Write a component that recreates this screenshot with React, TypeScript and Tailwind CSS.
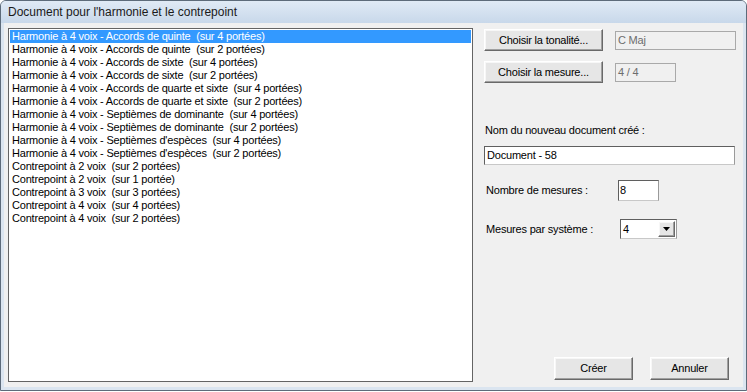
import React from "react";

const items = [
  "Harmonie à 4 voix - Accords de quinte  (sur 4 portées)",
  "Harmonie à 4 voix - Accords de quinte  (sur 2 portées)",
  "Harmonie à 4 voix - Accords de sixte  (sur 4 portées)",
  "Harmonie à 4 voix - Accords de sixte  (sur 2 portées)",
  "Harmonie à 4 voix - Accords de quarte et sixte  (sur 4 portées)",
  "Harmonie à 4 voix - Accords de quarte et sixte  (sur 2 portées)",
  "Harmonie à 4 voix - Septièmes de dominante  (sur 4 portées)",
  "Harmonie à 4 voix - Septièmes de dominante  (sur 2 portées)",
  "Harmonie à 4 voix - Septièmes d'espèces  (sur 4 portées)",
  "Harmonie à 4 voix - Septièmes d'espèces  (sur 2 portées)",
  "Contrepoint à 2 voix  (sur 2 portées)",
  "Contrepoint à 2 voix  (sur 1 portée)",
  "Contrepoint à 3 voix  (sur 3 portées)",
  "Contrepoint à 4 voix  (sur 4 portées)",
  "Contrepoint à 4 voix  (sur 2 portées)",
];

function Btn({ children, className = "" }: { children: React.ReactNode; className?: string }) {
  return (
    <div
      className={
        "flex items-center justify-center border border-t-[#ffffff] border-l-[#ffffff] border-r-[#696969] border-b-[#696969] bg-[#e6e6e6] shadow-[inset_-1px_-1px_0_#a0a0a0,inset_1px_1px_0_#f7f7f7] text-black " +
        className
      }
    >
      {children}
    </div>
  );
}

export default function App() {
  return (
    <div
      className="w-[747px] h-[392px] bg-white text-[11px] leading-[13px] tracking-[-0.2px]"
      style={{ fontFamily: '"Liberation Sans", Arial, sans-serif' }}
    >
      <div className="w-[747px] h-[391px] flex flex-col border border-[#5d6b7a] rounded-t-[6px] overflow-hidden bg-[#dbe5f0]">
        {/* title bar */}
        <div className="h-[22px] shrink-0 bg-gradient-to-b from-[#e0eaf5] to-[#c8d8ea] flex items-center pl-[7px]">
          <span className="text-[12px] text-[#1a1a1a] tracking-normal">
            Document pour l'harmonie et le contrepoint
          </span>
        </div>
        {/* client area */}
        <div className="flex-1 mx-[3px] mb-[3px] bg-[#f0f0f0] flex flex-row pl-[4px] pt-[5px] pb-[5px]">
          {/* list */}
          <div className="w-[465px] h-[354px] border border-[#646464] bg-white p-[1px] shrink-0">
            {items.map((t, i) => (
              <div
                key={i}
                className={
                  "h-[13px] pl-[2px] whitespace-pre " +
                  (i === 0 ? "bg-[#3399ff] text-white" : "text-black")
                }
              >
                {t}
              </div>
            ))}
          </div>
          {/* right column */}
          <div className="flex-1 flex flex-col ml-[11px] pt-[1px]">
            <div className="flex flex-row items-center">
              <Btn className="w-[119px] h-[22px]">Choisir la tonalité...</Btn>
              <div className="ml-[12px] w-[121px] h-[19px] border border-[#a9a9a9] bg-[#f0f0f0] text-[#6d6d6d] pl-[2px] flex items-center">
                C Maj
              </div>
            </div>
            <div className="flex flex-row items-center mt-[10px]">
              <Btn className="w-[119px] h-[22px]">Choisir la mesure...</Btn>
              <div className="ml-[12px] w-[61px] h-[19px] border border-[#a9a9a9] bg-[#f0f0f0] text-[#6d6d6d] pl-[2px] flex items-center">
                4 / 4
              </div>
            </div>
            <div className="mt-[41px] pl-[1px]">Nom du nouveau document créé :</div>
            <div className="mt-[9px] w-[251px] h-[19px] border border-t-[#5f5f5f] border-l-[#5f5f5f] border-r-[#9a9a9a] border-b-[#c8c8c8] bg-white pl-[2px] flex items-center">
              Document - 58
            </div>
            <div className="flex flex-row items-center mt-[15px]">
              <div className="w-[134px] pl-[2px]">Nombre de mesures :</div>
              <div className="w-[41px] h-[21px] border border-t-[#5f5f5f] border-l-[#5f5f5f] border-r-[#9a9a9a] border-b-[#c8c8c8] bg-white pl-[1px] flex items-center">
                8
              </div>
            </div>
            <div className="flex flex-row items-center mt-[18px]">
              <div className="w-[136px] pl-[2px]">Mesures par système :</div>
              <div className="w-[57px] h-[20px] border border-t-[#5f5f5f] border-l-[#5f5f5f] border-r-[#9a9a9a] border-b-[#c8c8c8] bg-white flex items-center">
                <div className="flex-1 pl-[2px]">4</div>
                <Btn className="w-[17px] h-[16px] mr-[1px]">
                  <svg width="7" height="4" viewBox="0 0 7 4">
                    <path d="M0 0 L7 0 L3.5 4 Z" fill="#000" />
                  </svg>
                </Btn>
              </div>
            </div>
            <div className="mt-auto flex flex-row justify-end pr-[14px] gap-[17px] mb-[2px]">
              <Btn className="w-[79px] h-[23px]">Créer</Btn>
              <Btn className="w-[79px] h-[23px]">Annuler</Btn>
            </div>
          </div>
        </div>
      </div>
    </div>
  );
}
